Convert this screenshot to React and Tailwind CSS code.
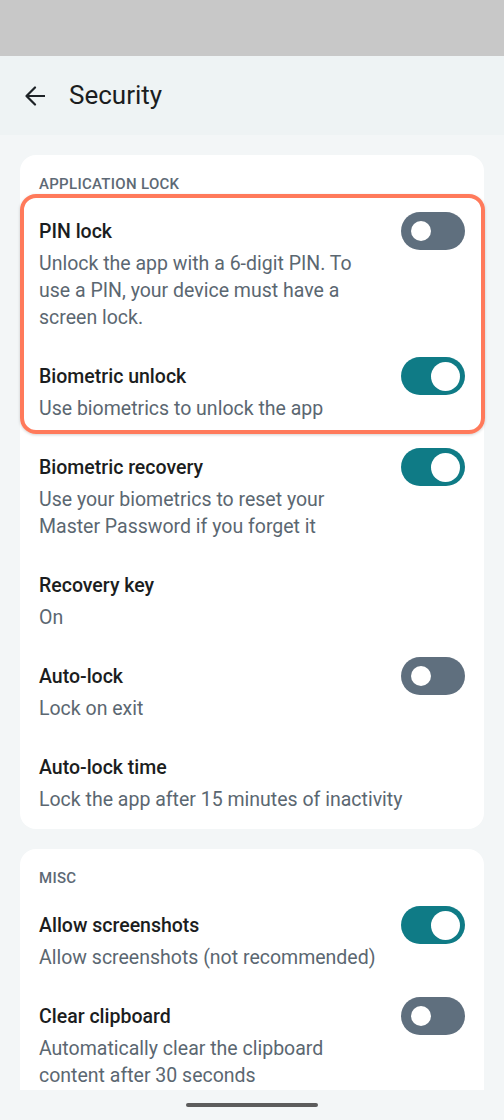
import React from "react";

const LOCK_ROWS = [
  {
    title: "Biometric recovery",
    sub: "Use your biometrics to reset your Master Password if you forget it",
    toggle: true,
  },
  { title: "Recovery key", sub: "On" },
  { title: "Auto-lock", sub: "Lock on exit", toggle: false },
  {
    title: "Auto-lock time",
    sub: "Lock the app after 15 minutes of inactivity",
  },
];

const MISC_ROWS = [
  {
    title: "Allow screenshots",
    sub: "Allow screenshots (not recommended)",
    toggle: true,
  },
  {
    title: "Clear clipboard",
    sub: "Automatically clear the clipboard content after 30 seconds",
    toggle: false,
  },
];

function Toggle({ on }) {
  return (
    <div
      className={
        on
          ? "w-16 h-[38px] shrink-0 rounded-full bg-[#0f7b86] flex items-center justify-end pr-[5px]"
          : "w-16 h-[38px] shrink-0 rounded-full bg-[#5f6f7e] flex items-center justify-start pl-[10px]"
      }
    >
      <span
        className={
          on
            ? "w-[29px] h-[29px] rounded-full bg-white"
            : "w-5 h-5 rounded-full bg-white"
        }
      />
    </div>
  );
}

function Row({ title, sub, toggle }) {
  const hasToggle = toggle !== undefined;
  return (
    <div className="flex items-start gap-5 px-[19px] py-4">
      <div className="flex-1 min-w-0">
        <p className="text-[19.5px] leading-[28px] font-medium text-[#1b1d20]">
          {title}
        </p>
        <p className="mt-1 text-[19.5px] leading-[27px] text-[#5b6771]">
          {sub}
        </p>
      </div>
      {hasToggle && (
        <div className="-mt-1.5">
          <Toggle on={toggle} />
        </div>
      )}
    </div>
  );
}

function SectionHeader({ children }) {
  return (
    <p className="px-[19px] pt-[19px] pb-[8px] text-[15px] leading-5 font-medium tracking-[0.02em] text-[#5d6975]">
      {children}
    </p>
  );
}

export default function App() {
  return (
    <div
      className="w-[504px] h-[1120px] flex flex-col overflow-hidden bg-[#f3f6f7]"
      style={{ fontFamily: "Roboto, 'Noto Sans', sans-serif" }}
    >
      {/* status bar */}
      <div className="h-14 shrink-0 bg-[#c8c8c8]" />

      {/* app bar */}
      <div className="h-[79px] shrink-0 bg-[#eef3f4] flex items-center pl-[25px] gap-[24px]">
        <svg width="20" height="20" viewBox="0 0 20 20" fill="none">
          <path
            d="M19.5 10H1.5M10 1.5L1.5 10L10 18.5"
            stroke="#1d2226"
            strokeWidth="2.2"
            strokeLinecap="round"
            strokeLinejoin="round"
          />
        </svg>
        <h1 className="text-[26px] leading-8 text-[#1b1d20] -mt-0.5">Security</h1>
      </div>

      {/* content */}
      <div className="flex-1 min-h-0 overflow-hidden px-5 pt-5 flex flex-col gap-5">
        <div className="bg-white rounded-2xl shrink-0">
          <SectionHeader>APPLICATION LOCK</SectionHeader>

          <div className="relative">
            <Row
              title="PIN lock"
              sub="Unlock the app with a 6-digit PIN. To use a PIN, your device must have a screen lock."
              toggle={false}
            />
            <Row
              title="Biometric unlock"
              sub="Use biometrics to unlock the app"
              toggle={true}
            />
            {/* highlight outline over the first two rows */}
            <span className="absolute left-0 -right-px -top-2 bottom-1 rounded-2xl border-[4.5px] border-[#ff7a5b] shadow-[0_1px_3px_rgba(0,0,0,0.18)] pointer-events-none" />
          </div>

          {LOCK_ROWS.map((r) => (
            <Row key={r.title} {...r} />
          ))}
        </div>

        <div className="bg-white rounded-t-2xl shrink-0">
          <SectionHeader>MISC</SectionHeader>
          {MISC_ROWS.map((r) => (
            <Row key={r.title} {...r} />
          ))}
        </div>
      </div>

      {/* gesture bar */}
      <div className="h-[30px] shrink-0 bg-[#f3f6f7] flex justify-center pt-[13px]">
        <div className="w-[132px] h-1 rounded-full bg-[#5c5c5c]" />
      </div>
    </div>
  );
}
